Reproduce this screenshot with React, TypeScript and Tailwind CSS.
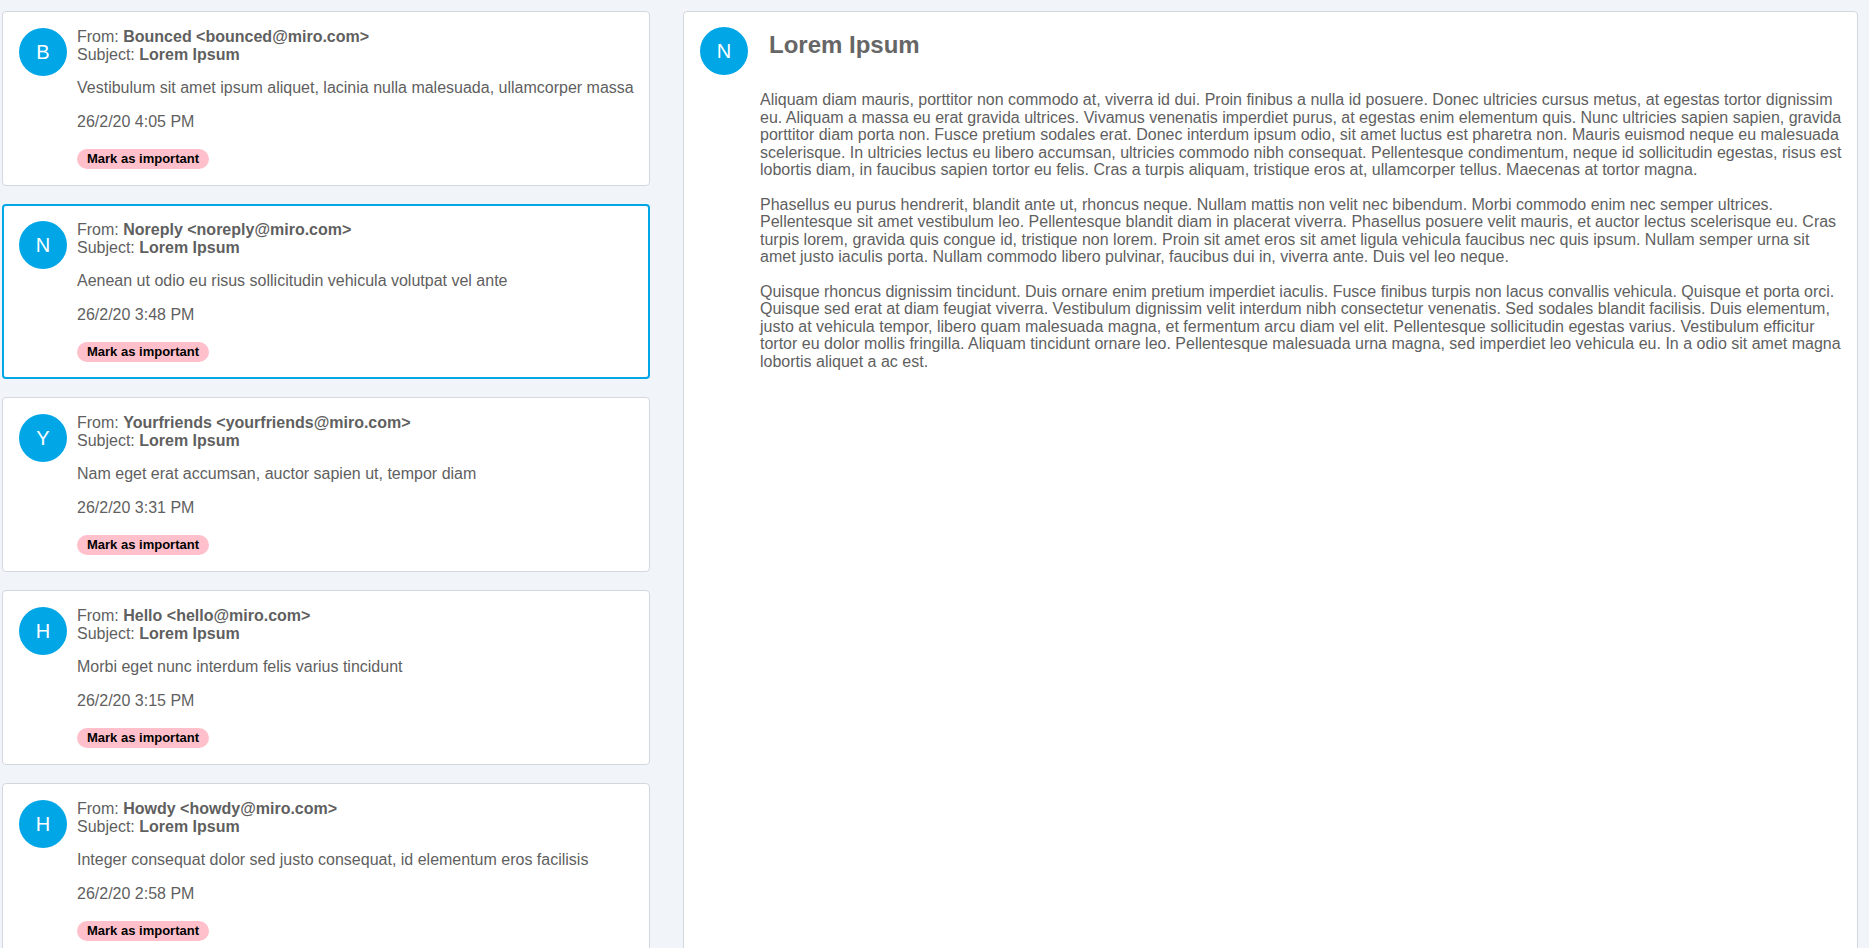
import React from 'react';

type Mail = {
  name: string;
  email: string;
  subject: string;
  preview: string;
  date: string;
};

const mails: Mail[] = [
  {
    name: 'Bounced',
    email: 'bounced@miro.com',
    subject: 'Lorem Ipsum',
    preview: 'Vestibulum sit amet ipsum aliquet, lacinia nulla malesuada, ullamcorper massa',
    date: '26/2/20 4:05 PM',
  },
  {
    name: 'Noreply',
    email: 'noreply@miro.com',
    subject: 'Lorem Ipsum',
    preview: 'Aenean ut odio eu risus sollicitudin vehicula volutpat vel ante',
    date: '26/2/20 3:48 PM',
  },
  {
    name: 'Yourfriends',
    email: 'yourfriends@miro.com',
    subject: 'Lorem Ipsum',
    preview: 'Nam eget erat accumsan, auctor sapien ut, tempor diam',
    date: '26/2/20 3:31 PM',
  },
  {
    name: 'Hello',
    email: 'hello@miro.com',
    subject: 'Lorem Ipsum',
    preview: 'Morbi eget nunc interdum felis varius tincidunt',
    date: '26/2/20 3:15 PM',
  },
  {
    name: 'Howdy',
    email: 'howdy@miro.com',
    subject: 'Lorem Ipsum',
    preview: 'Integer consequat dolor sed justo consequat, id elementum eros facilisis',
    date: '26/2/20 2:58 PM',
  },
  {
    name: 'Support',
    email: 'support@miro.com',
    subject: 'Lorem Ipsum',
    preview: 'Donec sed lectus vitae magna porta tincidunt',
    date: '26/2/20 2:41 PM',
  },
];

const paragraphs = [
  'Aliquam diam mauris, porttitor non commodo at, viverra id dui. Proin finibus a nulla id posuere. Donec ultricies cursus metus, at egestas tortor dignissim eu. Aliquam a massa eu erat gravida ultrices. Vivamus venenatis imperdiet purus, at egestas enim elementum quis. Nunc ultricies sapien sapien, gravida porttitor diam porta non. Fusce pretium sodales erat. Donec interdum ipsum odio, sit amet luctus est pharetra non. Mauris euismod neque eu malesuada scelerisque. In ultricies lectus eu libero accumsan, ultricies commodo nibh consequat. Pellentesque condimentum, neque id sollicitudin egestas, risus est lobortis diam, in faucibus sapien tortor eu felis. Cras a turpis aliquam, tristique eros at, ullamcorper tellus. Maecenas at tortor magna.',
  'Phasellus eu purus hendrerit, blandit ante ut, rhoncus neque. Nullam mattis non velit nec bibendum. Morbi commodo enim nec semper ultrices. Pellentesque sit amet vestibulum leo. Pellentesque blandit diam in placerat viverra. Phasellus posuere velit mauris, et auctor lectus scelerisque eu. Cras turpis lorem, gravida quis congue id, tristique non lorem. Proin sit amet eros sit amet ligula vehicula faucibus nec quis ipsum. Nullam semper urna sit amet justo iaculis porta. Nullam commodo libero pulvinar, faucibus dui in, viverra ante. Duis vel leo neque.',
  'Quisque rhoncus dignissim tincidunt. Duis ornare enim pretium imperdiet iaculis. Fusce finibus turpis non lacus convallis vehicula. Quisque et porta orci. Quisque sed erat at diam feugiat viverra. Vestibulum dignissim velit interdum nibh consectetur venenatis. Sed sodales blandit facilisis. Duis elementum, justo at vehicula tempor, libero quam malesuada magna, et fermentum arcu diam vel elit. Pellentesque sollicitudin egestas varius. Vestibulum efficitur tortor eu dolor mollis fringilla. Aliquam tincidunt ornare leo. Pellentesque malesuada urna magna, sed imperdiet leo vehicula eu. In a odio sit amet magna lobortis aliquet a ac est.',
];

function Avatar({ letter }: { letter: string }) {
  return (
    <div className="w-[48px] h-[48px] shrink-0 rounded-full bg-[#00a6e6] flex items-center justify-center text-white text-[20px] leading-none">
      {letter}
    </div>
  );
}

function MailCard({ mail, selected }: { mail: Mail; selected: boolean }) {
  return (
    <div
      className={
        selected
          ? 'flex gap-[10px] bg-white rounded-[4px] border-2 border-[#00a6e6] pl-[15px] pr-[8px] pt-[15px] pb-[15px]'
          : 'flex gap-[10px] bg-white rounded-[4px] border border-[#d3d7e0] pl-[16px] pr-[9px] pt-[16px] pb-[16px]'
      }
    >
      <Avatar letter={mail.name[0]} />
      <div className="flex flex-col items-start text-[16px] text-[#5f5f5f] whitespace-nowrap">
        <div className="leading-[18px]">
          From: <b>{mail.name} &lt;{mail.email}&gt;</b>
        </div>
        <div className="leading-[18px]">
          Subject: <b>{mail.subject}</b>
        </div>
        <p className="mt-[15px] leading-[18px]">{mail.preview}</p>
        <p className="mt-[16px] leading-[18px]">{mail.date}</p>
        <button
          type="button"
          className="mt-[18px] h-[20px] px-[10px] rounded-[10px] bg-[#ffc0cb] text-black text-[13px] font-bold leading-[20px]"
        >
          Mark as important
        </button>
      </div>
    </div>
  );
}

export default function App() {
  return (
    <div
      className="h-screen overflow-hidden bg-[#f1f4f9] flex"
      style={{ fontFamily: "'Liberation Sans', Arial, sans-serif" }}
    >
      {/* Inbox list */}
      <div className="w-[652px] shrink-0 px-[2px] pt-[11px] flex flex-col gap-[18px]">
        {mails.map((m, i) => (
          <MailCard key={m.email} mail={m} selected={i === 1} />
        ))}
      </div>

      {/* Reading pane */}
      <div className="flex-1 ml-[31px] mr-[11px] mt-[11px] min-h-[1000px] bg-white rounded-[4px] border border-[#d3d7e0] pl-[16px] pr-[12px] pt-[15px]">
        <div className="flex items-start gap-[21px]">
          <Avatar letter="N" />
          <h1 className="mt-[4px] text-[24px] font-bold text-[#666] leading-[27px]">Lorem Ipsum</h1>
        </div>
        <div className="ml-[60px] mt-[16px] text-[16px] text-[#5f5f5f] leading-[17.5px] flex flex-col gap-[17px]">
          {paragraphs.map((p, i) => (
            <p key={i}>{p}</p>
          ))}
        </div>
      </div>
    </div>
  );
}
